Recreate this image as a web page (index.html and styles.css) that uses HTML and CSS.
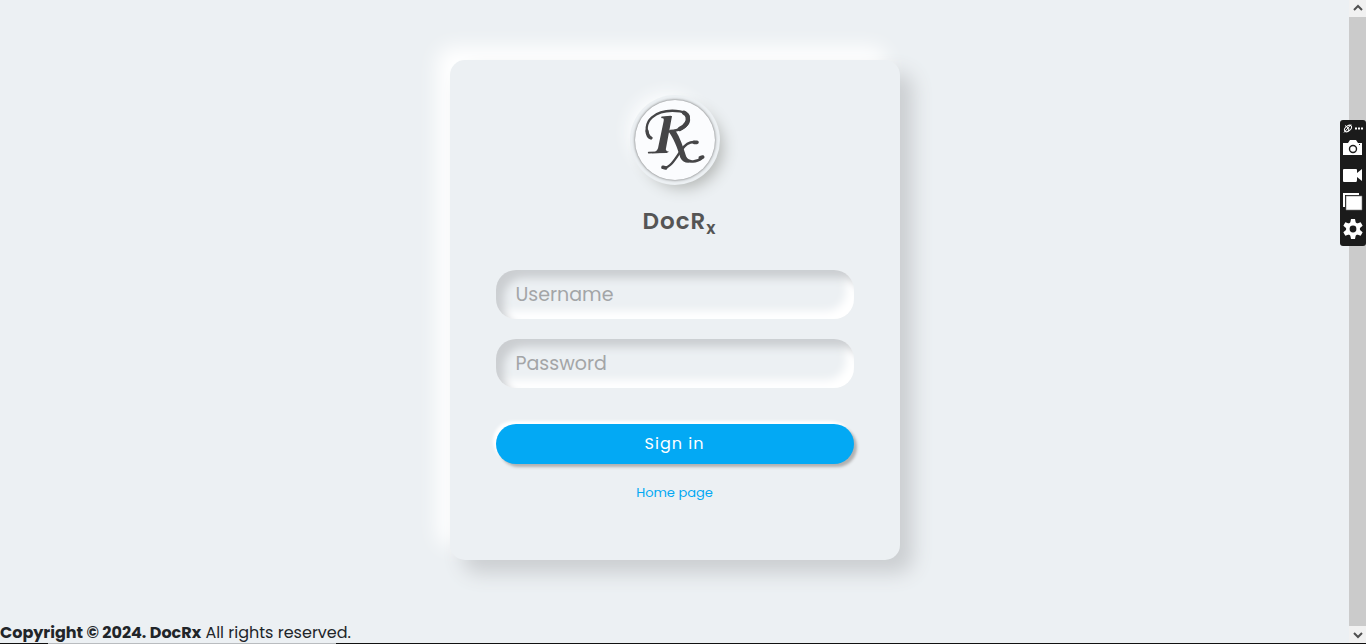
FILE: index.html
```html
<!DOCTYPE html>
<html lang="en">
<head>
<meta charset="utf-8">
<meta name="viewport" content="width=device-width, initial-scale=1">
<title>DocRx</title>
<link rel="stylesheet" href="styles.css">
</head>
<body>
<div class="screen">
  <div class="page">
    <main class="card">
      <div class="logo">
        <svg viewBox="45 45 240 240" aria-label="Rx" role="img">
          <g fill="none" stroke="#454547" stroke-linecap="round" stroke-linejoin="round">
            <path stroke-width="7" d="M90 157C75 142 77 113 96 97C117 79 150 75 180 79C200 82 209 91 207 105C205 123 181 137 151 138"/>
            <path stroke-width="10" d="M93 159C85 156 82 149 81 138"/>
            <path stroke-width="13" d="M192 83C203 88 207 101 200 114C195 123 188 128 179 132"/>
            <path stroke-width="5" d="M126 97L152 95M86 203L136 201"/>
            <path stroke-width="7" d="M129 248C151 251 169 217 184 195C197 177 211 168 229 172"/>
            <path stroke-width="11" d="M129 247L137 249M222 172L231 172M241 218L248 216"/>
            <path stroke-width="8" d="M188 205C198 233 224 236 246 219"/>
          </g>
          <path fill="#454547" d="M132 96L156 93L138 190Q135 199 147 200L140 204L94 205Q110 202 114 190L131 108Q133 99 126 98ZM144 138L165 134C181 158 190 187 198 213Q204 229 215 232Q191 238 181 218C173 190 160 157 144 138Z"/>
        </svg>
      </div>
      <h1 class="name">DocR<sub>x</sub></h1>
      <form class="form">
        <input class="field" type="text" placeholder="Username" aria-label="Username">
        <input class="field" type="password" placeholder="Password" aria-label="Password">
        <button class="submit" type="button">Sign in</button>
      </form>
      <a class="home" href="#">Home page</a>
    </main>
    <footer class="footer"><strong>Copyright © 2024. DocRx</strong> All rights reserved.</footer>
  </div>
  <div class="scroll">
    <svg class="arrow" viewBox="0 0 17 17" aria-hidden="true"><path d="M5 10L9 6L13 10"/></svg>
    <div class="thumb"></div>
    <svg class="arrow" viewBox="0 0 17 17" aria-hidden="true"><path d="M5 7L9 11L13 7"/></svg>
  </div>
</div>
<div class="edge"><span></span></div>
<div class="tools">
  <svg class="grip" viewBox="0 0 26 14" aria-hidden="true">
    <g fill="none" stroke="#fff"><ellipse cx="8" cy="8" rx="4" ry="2.5" transform="rotate(-40 8 8)"/><path d="M4 12L11 4M5 5L9 8L8 11"/></g>
    <path fill="#fff" d="M15 7h2v2h-2zM18 7h2v2h-2zM21 7h2v2h-2z"/>
  </svg>
  <button class="tool" type="button" aria-label="Take screenshot"><svg viewBox="0 0 20 20"><path fill="#fff" d="M0 5H5L7 2H13L15 5H19V17H0Z"/><circle cx="10" cy="11" r="3.5" fill="#fff" stroke="#1b1b1b" stroke-width="1.4"/><path fill="#1b1b1b" d="M16 6h1v1h-1z"/></svg></button>
  <button class="tool" type="button" aria-label="Record video"><svg viewBox="0 0 20 20"><path fill="#fff" d="M1 4H13Q14 4 14 5V8L19 4V16L14 12V15Q14 17 13 17H1Q0 17 0 16V5Q0 4 1 4Z"/></svg></button>
  <button class="tool" type="button" aria-label="Gallery"><svg viewBox="0 0 20 20"><path fill="#fff" d="M0 1H16V3H2V15H0Z"/><path fill="#fff" stroke="#777" stroke-width=".6" d="M3 4H19V18H3Z"/></svg></button>
  <button class="tool" type="button" aria-label="Settings"><svg viewBox="0 0 20 20"><g fill="#fff"><circle cx="10" cy="10" r="7"/><path id="tooth" d="M8 0H12L13 5H7ZM8 20H12L13 15H7Z"/><use href="#tooth" transform="rotate(60 10 10)"/><use href="#tooth" transform="rotate(120 10 10)"/></g><circle cx="10" cy="10" r="3.4" fill="#1b1b1b"/></svg></button>
</div>
</body>
</html>
```
FILE: styles.css
```css
* { box-sizing: border-box; }
body {
  margin: 0;
  min-height: 100vh;
  display: flex;
  flex-direction: column;
  background: #ecf0f3;
  color: #212529;
  font: 16px/24px Poppins, Inter, sans-serif;
}
.screen { flex: 1; display: flex; }
.page { flex: 1; display: flex; flex-direction: column; }
.card {
  width: 100%;
  max-width: 450px;
  min-height: 500px;
  margin: 60px auto;
  padding: 40px 46px;
  display: flex;
  flex-direction: column;
  align-items: center;
  border-radius: 15px;
  box-shadow: 13px 13px 20px #cbced1, -13px -13px 20px #fff;
}
.logo {
  width: 80px;
  height: 80px;
  overflow: hidden;
  border-radius: 50%;
  background: #fbfcfe;
  box-shadow: 0 0 3px #5f5f5f, 0 0 0 5px #ecf0f3, 8px 8px 15px #b4b7b5, -8px -8px 15px #fbfcfd;
}
.logo svg { display: block; width: 100%; }
.name {
  margin: 24px 0 32px;
  padding-left: 10px;
  color: #555;
  font-size: 23px;
  line-height: 34px;
  font-weight: 600;
  letter-spacing: 1px;
}
.name sub { font-size: 17px; line-height: 0; vertical-align: -5px; }
.form { width: 100%; display: flex; flex-direction: column; gap: 20px; }
.field {
  width: 100%;
  height: 49px;
  padding: 10px 20px;
  border: 0;
  border-radius: 20px;
  background: none;
  color: #666;
  font: inherit;
  font-size: 19px;
  box-shadow: inset 8px 8px 8px #cbced1, inset -8px -8px 8px #fff;
}
.field::placeholder { color: #a3a5a7; opacity: 1; }
.submit {
  height: 40px;
  margin-top: 16px;
  border: 0;
  border-radius: 20px;
  background: #03a9f4;
  color: #fff;
  font: inherit;
  letter-spacing: 1px;
  box-shadow: 3px 3px 3px #b1b1b1, -3px -3px 3px #fff;
}
.home {
  margin-top: 18px;
  color: #03a9f4;
  font-size: 13px;
  line-height: 22px;
  text-decoration: none;
}
.footer { height: 23px; line-height: 26px; }
.scroll { width: 17px; display: flex; flex-direction: column; background: #f1f1f1; }
.arrow { width: 17px; height: 17px; fill: none; stroke: #505050; stroke-width: 2; }
.thumb { flex: 1; background: #cbcbcb; }
.edge { display: flex; height: 1px; padding-left: 48px; background: #111; }
.edge span { width: 288px; background: #b9bcbf; }
.tools {
  position: fixed;
  top: 120px;
  right: 0;
  width: 26px;
  padding-bottom: 3px;
  display: flex;
  flex-direction: column;
  align-items: center;
  border-radius: 3px;
  background: #1b1b1b;
}
.grip { width: 26px; height: 15px; }
.tool { display: flex; height: 27px; padding: 3px; border: 0; background: none; }
.tool svg { width: 20px; height: 20px; }
```
